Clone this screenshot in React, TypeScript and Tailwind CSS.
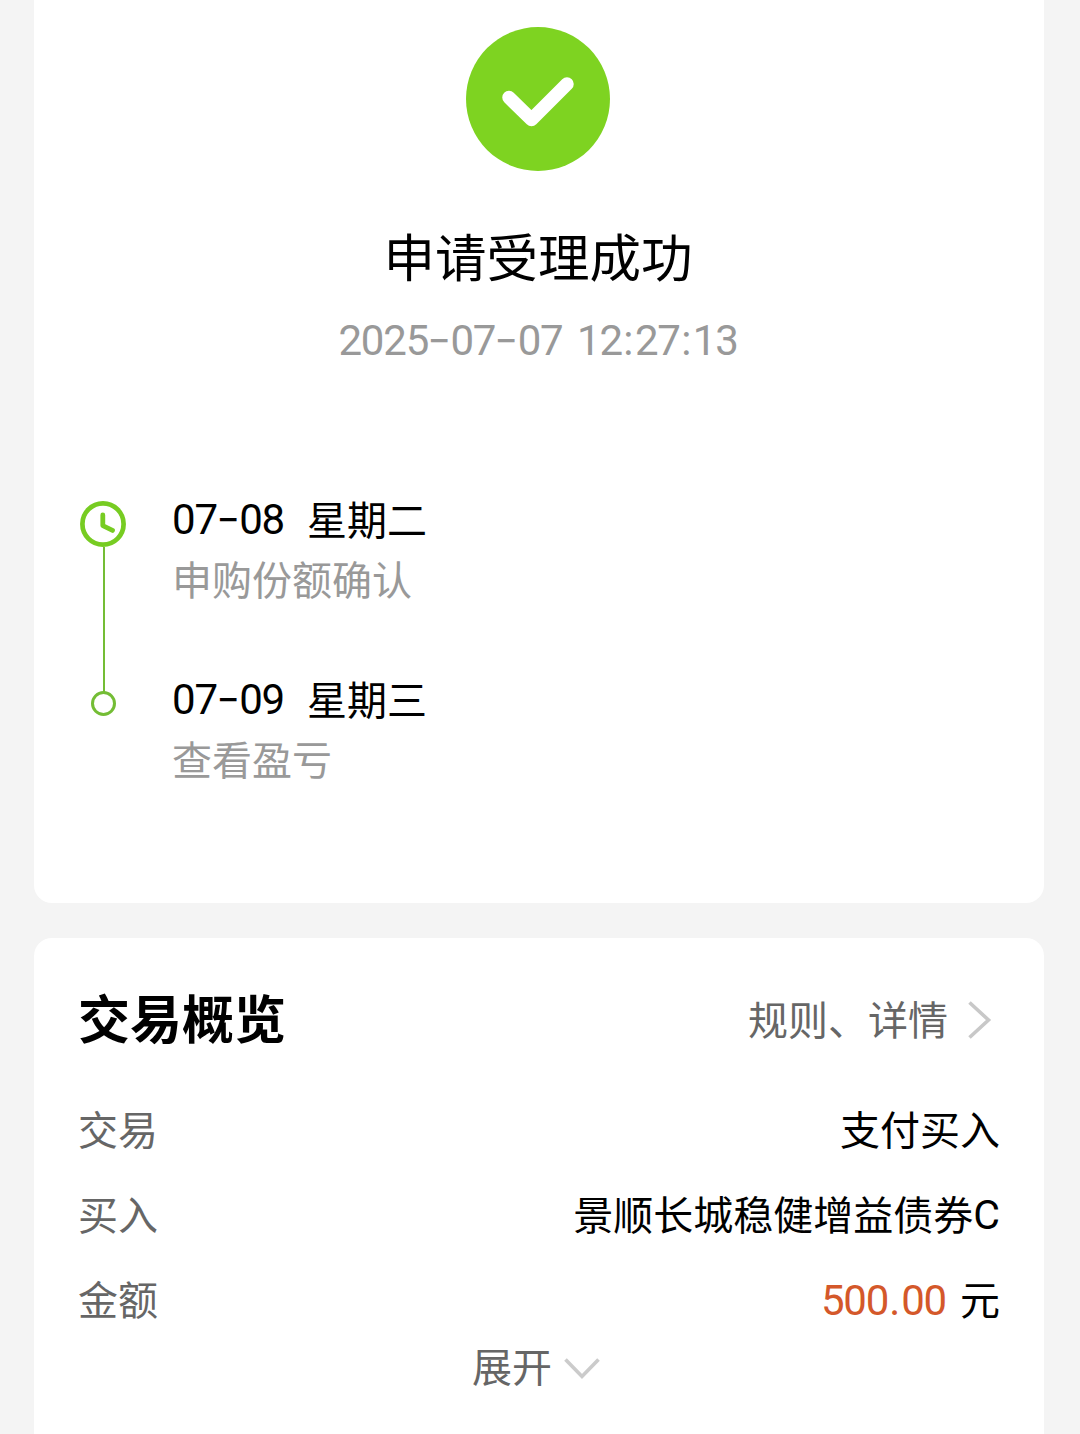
import { Fragment, type ReactNode } from 'react';

const details = [
  { label: '交易', value: '支付买入' },
  { label: '买入', value: '景顺长城稳健增益债券', suffix: 'C' },
];

export default function App() {
  return (
    <main className="flex h-[1434px] w-[1080px] flex-col gap-[35px] overflow-hidden bg-[#f4f4f4] pr-9 pl-[34px] font-['Noto_Sans_CJK_SC',sans-serif] text-[40px] leading-[60px] text-black">
      <section className="h-[903px] shrink-0 rounded-b-[18px] bg-white pt-[27px]">
        <div className="flex flex-col items-center pr-[2px]">
          <SuccessIcon />
          <h1 className="mt-[46px] text-[51.5px] leading-[76px]">申请受理成功</h1>
          <p className="mt-[15px] text-[#999]"><Digits text="2025-07-07 12:27:13" /></p>
        </div>

        <ol className="mt-[119px] flex flex-col pl-[46px]">
          <Step marker={<ClockIcon />} date="07-08" weekday="星期二" note="申购份额确认" line />
          <Step marker={<span className="mt-[10px] h-[25px] w-[25px] rounded-full border-[3px] border-[#74bd35]" />} date="07-09" weekday="星期三" note="查看盈亏" />
        </ol>
      </section>

      <section className="h-[520px] shrink-0 rounded-t-[18px] bg-white pt-[41px] pr-[44px] pl-[44px]">
        <header className="flex h-[82px] items-center justify-between">
          <h2 className="pb-[6px] text-[52px] font-bold">交易概览</h2>
          <a className="flex items-center text-[#666]">
            <span className="pb-[4px]">规则、详情</span>
            <svg className="mr-[8px] ml-[20px]" width="24" height="38" viewBox="0 0 24 38" fill="none" stroke="#c8c8c8" strokeWidth="3.6">
              <path d="M1.5 1.5 20.5 19 1.5 36.5" />
            </svg>
          </a>
        </header>

        <dl className="mt-[37px] flex flex-col gap-[25px]">
          {details.map((item) => (
            <Row key={item.label} label={item.label}>
              {item.value}
              {item.suffix && <span className="pt-[4px] font-['Roboto',sans-serif] text-[41px]">{item.suffix}</span>}
            </Row>
          ))}
          <Row label="金额">
            <span className="pt-[2px] text-[#d4582a]"><Digits text="500.00" /></span>
            <span className="ml-[14px]">元</span>
          </Row>
        </dl>

        <button className="mx-auto mt-[7px] flex items-center pr-[6px] text-[#666]">
          展开
          <svg className="mt-[8px] ml-[12px]" width="36" height="22" viewBox="0 0 36 22" fill="none" stroke="#cbcbcb" strokeWidth="3.6">
            <path d="M1.5 1.5 18 18.5 34.5 1.5" />
          </svg>
        </button>
      </section>
    </main>
  );
}

function Row({ label, children }: { label: string; children: ReactNode }) {
  return (
    <div className="flex h-[60px] items-center justify-between">
      <dt className="text-[#666]">{label}</dt>
      <dd className="flex items-center">{children}</dd>
    </div>
  );
}

function Step({ marker, date, weekday, note, line }: { marker: ReactNode; date: string; weekday: string; note: string; line?: boolean }) {
  return (
    <li className="flex">
      <div className="flex w-[46px] flex-col items-center pt-[11px]">
        {marker}
        {line && <span className="-mb-[22px] ml-[2px] w-[2px] flex-1 bg-[#74bd35]" />}
      </div>
      <div className={line ? 'ml-[46px] h-[180px]' : 'ml-[46px]'}>
        <p className="flex h-[60px] items-center"><Digits text={date} /><span className="ml-[23px] pb-[4px]">{weekday}</span></p>
        <p className="-mt-[2px] text-[#999]">{note}</p>
      </div>
    </li>
  );
}

// Digits share one pitch; separators get their own widths.
function Digits({ text }: { text: string }) {
  return (
    <span className="font-['Roboto',sans-serif] text-[42px] tracking-[-1.2px] whitespace-pre">
      {text.split(/([-:. ])/).map((part, i) => (
        <Fragment key={i}>
          {part === '-' && <span className="inline-block w-[22.4px] -translate-y-[2px] scale-x-[1.3] text-center font-['Inter',sans-serif] text-[40px] tracking-normal">-</span>}
          {(part === ':' || part === '.') && <span className="inline-block w-[13px] text-center tracking-normal">{part}</span>}
          {part === ' ' && <span className="tracking-[4.2px]"> </span>}
          {!/^[-:. ]$/.test(part) && part}
        </Fragment>
      ))}
    </span>
  );
}

function SuccessIcon() {
  return (
    <svg width="144" height="144" viewBox="0 0 144 144" fill="none">
      <circle cx="72" cy="72" r="72" fill="#7ed321" />
      <path d="M43 70.5 65.5 92.5 101 57" stroke="#fff" strokeWidth="13.5" strokeLinecap="round" strokeLinejoin="round" />
    </svg>
  );
}

function ClockIcon() {
  return (
    <svg className="shrink-0" width="46" height="46" viewBox="0 0 46 46" fill="none" stroke="#77cc22">
      <circle cx="23" cy="23" r="20.6" strokeWidth="4.7" />
      <path d="M22.8 14v10.6l9.7 4.8" strokeWidth="4.8" strokeLinecap="round" strokeLinejoin="round" />
    </svg>
  );
}
